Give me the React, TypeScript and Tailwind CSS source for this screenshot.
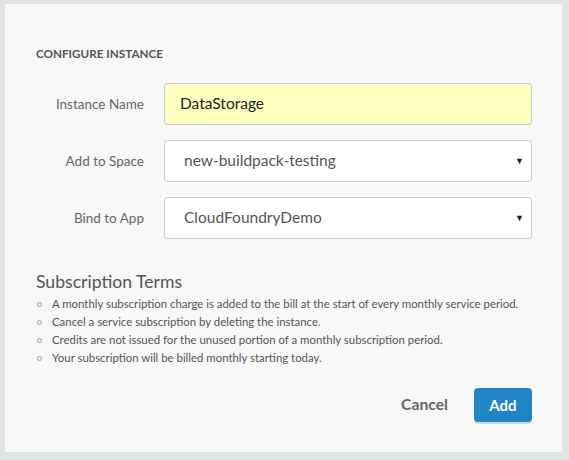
import React from "react";

const font = { fontFamily: "Lato, 'Open Sans', sans-serif" };

function Row({ label, children }: { label: string; children: React.ReactNode }) {
  return (
    <div className="flex items-center">
      <div className="w-[128px] text-right text-[13.5px] text-[#666] pr-[20px] shrink-0">{label}</div>
      {children}
    </div>
  );
}

function Select({ value }: { value: string }) {
  return (
    <div className="flex-1 h-[42px] bg-white border border-[#cccccc] rounded-[3px] flex items-center pl-[19px] pr-[7px] text-[15.5px] text-[#555]">
      <span className="flex-1">{value}</span>
      <span className="text-[9px] text-[#222]">▼</span>
    </div>
  );
}

export default function App() {
  return (
    <div className="w-[569px] h-[460px] bg-[#e1e4e5] pt-[4px] pl-[5px] pr-[7px] pb-[8px]" style={font}>
      <div className="h-full bg-[#f8f8f8] pl-[31px] pr-[30px] pt-[41px]">
        <div className="text-[11.7px] font-bold text-[#555] leading-[16px]">CONFIGURE INSTANCE</div>
        <div className="mt-[22px] flex flex-col gap-[15px]">
          <Row label="Instance Name">
            <div className="flex-1 h-[42px] bg-[#ffffc0] border border-[#cccccc] rounded-[3px] flex items-center pl-[15px] text-[15.5px] text-[#222]">
              DataStorage
            </div>
          </Row>
          <Row label="Add to Space">
            <Select value="new-buildpack-testing" />
          </Row>
          <Row label="Bind to App">
            <Select value="CloudFoundryDemo" />
          </Row>
        </div>
        <div className="mt-[31px] text-[17.6px] text-[#555] leading-[24px]">Subscription Terms</div>
        <ul className="mt-[1px] text-[11.4px] text-[#555] leading-[18px]">
          {[
            "A monthly subscription charge is added to the bill at the start of every monthly service period.",
            "Cancel a service subscription by deleting the instance.",
            "Credits are not issued for the unused portion of a monthly subscription period.",
            "Your subscription will be billed monthly starting today.",
          ].map((t) => (
            <li key={t} className="flex items-center">
              <span className="w-[5px] h-[5px] rounded-full border border-[#999] ml-[1px] mr-[10px]" />
              {t}
            </li>
          ))}
        </ul>
        <div className="mt-[21px] flex justify-end items-center">
          <span className="text-[15.7px] font-bold text-[#666] mr-[26px]">Cancel</span>
          <button className="w-[58px] h-[34px] bg-[#2185c5] rounded-[4px] text-white font-bold text-[15px] shadow-[0_2px_0_#d5d9db]">
            Add
          </button>
        </div>
      </div>
    </div>
  );
}
